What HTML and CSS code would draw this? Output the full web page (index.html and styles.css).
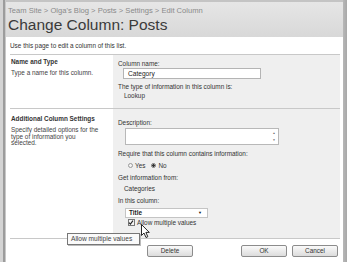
FILE: index.html
```html
<!DOCTYPE html>
<html>
<head>
<meta charset="utf-8">
<link rel="stylesheet" href="styles.css">
</head>
<body>
<div class="frame">
  <div class="edge-left"></div>
  <div class="main">
    <div class="header">
      <div class="crumbs">Team Site &gt; Olga's Blog &gt; Posts &gt; Settings &gt; Edit Column</div>
      <div class="title">Change Column: Posts</div>
    </div>
    <div class="content">
      <div class="intro">Use this page to edit a column of this list.</div>
      <div class="form">
        <div class="section first">
          <div class="label-col">
            <div class="sec-title">Name and Type</div>
            <div class="sec-desc">Type a name for this column.</div>
          </div>
          <div class="field-col">
            <div class="flabel">Column name:</div>
            <div class="textbox">Category</div>
            <div class="flabel gap">The type of information in this column is:</div>
            <div class="indent">Lookup</div>
          </div>
        </div>
        <div class="section second">
          <div class="label-col">
            <div class="sec-title">Additional Column Settings</div>
            <div class="sec-desc multi">Specify detailed options for the<br>type of information you<br>selected.</div>
          </div>
          <div class="field-col">
            <div class="flabel">Description:</div>
            <div class="textarea">
              <div class="scroll"><span>&#9650;</span><span>&#9660;</span></div>
            </div>
            <div class="flabel">Require that this column contains information:</div>
            <div class="radios">
              <span class="radio"></span><span class="rlabel">Yes</span>
              <span class="radio on"></span><span class="rlabel">No</span>
            </div>
            <div class="flabel">Get information from:</div>
            <div class="indent">Categories</div>
            <div class="flabel">In this column:</div>
            <div class="select"><span>Title</span><span class="arrow">&#9660;</span></div>
            <div class="check-row">
              <span class="checkbox">
                <svg width="7" height="7" viewBox="0 0 7 7"><path d="M1.2 3.6 L2.8 5.3 L5.8 1.3" fill="none" stroke="#222" stroke-width="1.3"/></svg>
              </span>
              <span>Allow multiple values</span>
            </div>
          </div>
        </div>
      </div>
      <div class="buttons">
        <span class="btn">Delete</span>
        <span class="spacer"></span>
        <span class="btn">OK</span>
        <span class="btn">Cancel</span>
      </div>
    </div>
  </div>
  <div class="edge-right"></div>
</div>
<div class="tooltip">Allow multiple values</div>
<svg class="cursor" width="10" height="15" viewBox="0 0 10 15">
  <path d="M0.5 0.5 L0.5 11.5 L3 9 L5 13.5 L6.8 12.7 L4.9 8.4 L8.3 8.4 Z" fill="#fff" stroke="#111" stroke-width="0.9"/>
</svg>
</body>
</html>
```
FILE: styles.css
```css
* { box-sizing: border-box; }
html, body { margin: 0; padding: 0; background: #fff; }
body {
  width: 350px;
  height: 262px;
  overflow: hidden;
  position: relative;
  font-family: "Liberation Sans", Arial, sans-serif;
  font-size: 6.4px;
  color: #333;
}
.frame { display: flex; height: 262px; }
.edge-left {
  width: 6px;
  background: linear-gradient(to right, #d4d4d4 0, #d4d4d4 3px, #9c9c9c 3px, #9c9c9c 5px, #c8c8c8 5px);
}
.edge-right {
  width: 7px;
  background: linear-gradient(to right, #b8b8b8 0, #a8a8a8 4px, #fff 4px);
}
.main { flex: 1; display: flex; flex-direction: column; }
.header {
  height: 37px;
  border-top: 2px solid #c4c4c4;
  background: linear-gradient(#e6e6e6, #d8d8d8);
  padding: 4px 0 0 2px;
}
.crumbs { color: #8a8a8a; font-size: 7.6px; line-height: 9px; }
.title {
  font-family: "Liberation Sans Narrow", "Liberation Sans", Arial, sans-serif;
  font-size: 15.5px;
  line-height: 19px;
  color: #3a3a3a;
  margin-top: 0;
}
.content { padding: 0 3px 0 4px; }
.intro { height: 17px; padding-top: 5px; line-height: 8px; }
.form { border-top: 1px solid #c8c8c8; }
.section {
  display: grid;
  grid-template-columns: 103px 1fr;
  border-bottom: 1px solid #c8c8c8;
}
.label-col { padding: 3px 0 0 1px; }
.sec-title { font-weight: bold; color: #333; line-height: 8px; }
.sec-desc { margin-top: 3px; line-height: 7px; color: #444; }
.sec-desc.multi { margin-top: 4px; line-height: 6.7px; }
.second .label-col { padding-top: 6px; }
.field-col { background: #efefef; padding: 4px 0 3px 5px; }
.first .field-col { height: 53px; }
.second .field-col { height: 129px; padding-top: 9px; }
.flabel { line-height: 9px; }
.flabel.gap { margin-top: 3px; }
.indent { padding-left: 6px; line-height: 10px; }
.textbox {
  width: 138px;
  height: 11px;
  margin-left: 5px;
  background: #fff;
  border: 1px solid #b4b4b4;
  padding-left: 4px;
  line-height: 9px;
  font-size: 6.6px;
  color: #222;
}
.textarea {
  width: 154px;
  height: 17px;
  margin: 1px 0 4px 7px;
  background: #fff;
  border: 1px solid #b8b8b8;
  display: flex;
  justify-content: flex-end;
}
.scroll {
  width: 8px;
  display: flex;
  flex-direction: column;
  justify-content: space-between;
  align-items: center;
  font-size: 3px;
  color: #666;
  padding: 2px 0;
}
.radios { display: flex; align-items: center; height: 11px; margin-top: 1.5px; padding-left: 10px; }
.radio {
  width: 5px; height: 5px; border-radius: 50%;
  border: 1px solid #999; background: #f4f4f4;
}
.radio.on { background: radial-gradient(circle, #333 0, #333 1.2px, #f0f0f0 1.5px); border-color: #777; }
.rlabel { margin: 0 6px 0 2px; }
.second .radios + .flabel { margin-top: 2px; }
.second .indent { margin-top: 2px; }
.second .indent + .flabel { margin-top: 2px; }
.select {
  width: 83px;
  height: 10px;
  margin: 3px 0 0 7px;
  background: #fff;
  border: 1px solid #c4c4c4;
  display: flex;
  justify-content: space-between;
  align-items: center;
  padding: 0 5px 0 3px;
  font-weight: bold;
  color: #222;
}
.arrow { font-size: 4px; color: #111; }
.check-row { display: flex; align-items: center; gap: 2px; padding-left: 10px; height: 10px; }
.checkbox {
  width: 7px; height: 7px;
  border: 1px solid #777;
  background: #f4f4f4;
  display: flex;
}
.checkbox svg { display: block; margin: -1px 0 0 -1px; }
.buttons {
  display: flex;
  gap: 5px;
  padding: 6px 1px 0 137px;
}
.spacer { width: 38px; }
.btn {
  width: 46px;
  height: 12px;
  border: 1px solid #8c8c8c;
  border-radius: 2px;
  background: linear-gradient(#fafafa, #dcdcdc);
  text-align: center;
  line-height: 10px;
  color: #333;
}
.tooltip {
  position: absolute;
  left: 67px;
  top: 233px;
  width: 73px;
  height: 12px;
  border: 1px solid #777;
  background: #fafafa;
  box-shadow: 1px 1px 0 #bbb;
  font-size: 6.6px;
  line-height: 10px;
  padding-left: 3px;
  color: #444;
}
.cursor { position: absolute; left: 141px; top: 224px; }
```
